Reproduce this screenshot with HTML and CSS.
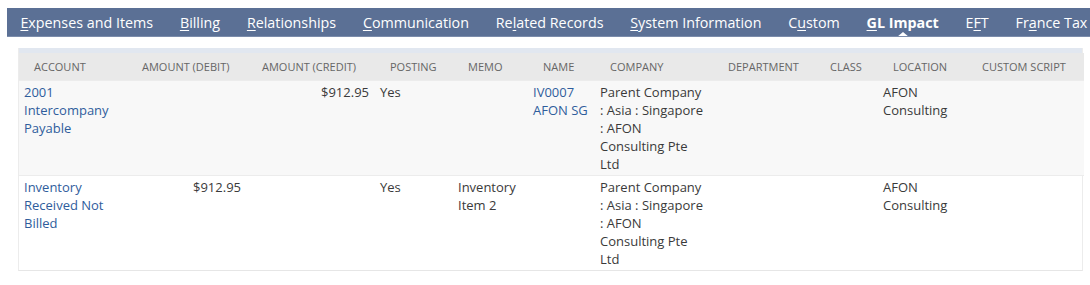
FILE: index.html
```html
<!DOCTYPE html>
<html lang="en">
<head>
    <meta charset="UTF-8">
    <title>GL Impact</title>
    <link rel="stylesheet" href="styles.css">
</head>
<body>

<div class="page">
    <div class="tabs">
        <div class="tab"><u>E</u>xpenses and Items</div>
        <div class="tab"><u>B</u>illing</div>
        <div class="tab"><u>R</u>elationships</div>
        <div class="tab"><u>C</u>ommunication</div>
        <div class="tab">Re<u>l</u>ated Records</div>
        <div class="tab"><u>S</u>ystem Information</div>
        <div class="tab">C<u>u</u>stom</div>
        <div class="tab active"><u>G</u>L Impact</div>
        <div class="tab">E<u>F</u>T</div>
        <div class="tab">Fr<u>a</u>nce Tax</div>
    </div>

    <div class="gl-box">
        <div class="band"></div>
        <table class="gl-table">
            <colgroup>
                <col style="width: 108px">
                <col style="width: 120px">
                <col style="width: 128px">
                <col style="width: 78px">
                <col style="width: 75px">
                <col style="width: 67px">
                <col style="width: 118px">
                <col style="width: 102px">
                <col style="width: 63px">
                <col style="width: 89px">
                <col style="width: 117px">
            </colgroup>
            <thead>
                <tr>
                    <th>Account</th>
                    <th>Amount (Debit)</th>
                    <th>Amount (Credit)</th>
                    <th>Posting</th>
                    <th>Memo</th>
                    <th>Name</th>
                    <th>Company</th>
                    <th>Department</th>
                    <th>Class</th>
                    <th>Location</th>
                    <th>Custom Script</th>
                </tr>
            </thead>
            <tbody>
                <tr class="odd">
                    <td><a href="#">2001 Intercompany Payable</a></td>
                    <td class="num"></td>
                    <td class="num">$912.95</td>
                    <td>Yes</td>
                    <td></td>
                    <td><a href="#">IV0007 AFON SG</a></td>
                    <td>Parent Company : Asia : Singapore : AFON Consulting Pte Ltd</td>
                    <td></td>
                    <td></td>
                    <td>AFON Consulting</td>
                    <td></td>
                </tr>
                <tr>
                    <td><a href="#">Inventory Received Not Billed</a></td>
                    <td class="num">$912.95</td>
                    <td class="num"></td>
                    <td>Yes</td>
                    <td>Inventory Item 2</td>
                    <td></td>
                    <td>Parent Company : Asia : Singapore : AFON Consulting Pte Ltd</td>
                    <td></td>
                    <td></td>
                    <td>AFON Consulting</td>
                    <td></td>
                </tr>
            </tbody>
        </table>
    </div>
</div>

</body>
</html>
```

FILE: styles.css
```css
html, body { margin: 0; background-color: #ffffff; }
body { font-family: "Open Sans", Arial, sans-serif; overflow: hidden; }
.page { padding: 8px 0 0 7px; }

.tabs { display: flex; height: 29px; background-color: #5b7095; border-bottom: 1px solid #7b8cab; box-sizing: border-box; overflow: hidden; white-space: nowrap; }
.tab { position: relative; padding: 2px 13.4px 0; font-size: 14.3px; color: #ffffff; line-height: 26px; }
.tab u { text-decoration-thickness: 1px; text-underline-offset: 2px; }
.tab.active { font-weight: bold; }
.tab.active::after { content: ""; position: absolute; left: 50%; bottom: -1px; margin-left: -6px; border-left: 6px solid transparent; border-right: 6px solid transparent; border-bottom: 5px solid #ffffff; }

.gl-box { margin: 11px 7px 0 11px; border-left: 1px solid #ececec; border-right: 1px solid #ececec; border-bottom: 1px solid #e6e6e6; }
.band { height: 5px; background-color: #e1e7f0; }
.gl-table { width: 100%; table-layout: fixed; border-collapse: collapse; font-size: 13px; line-height: 18px; color: #3a3a3a; }
.gl-table th { height: 27px; padding: 0 4px 0 15px; background-color: #e9e9e9; font-size: 11px; font-weight: normal; text-transform: uppercase; text-align: left; color: #666666; white-space: nowrap; }
.gl-table td { padding: 2px 6px 2px 5px; vertical-align: top; }
.gl-table tbody tr { border-top: 1px solid #ececec; }
.gl-table tbody tr.odd { background-color: #f8f8f8; }
.gl-table td.num { text-align: right; }
.gl-table a { color: #2f5d9c; text-decoration: none; }
```
